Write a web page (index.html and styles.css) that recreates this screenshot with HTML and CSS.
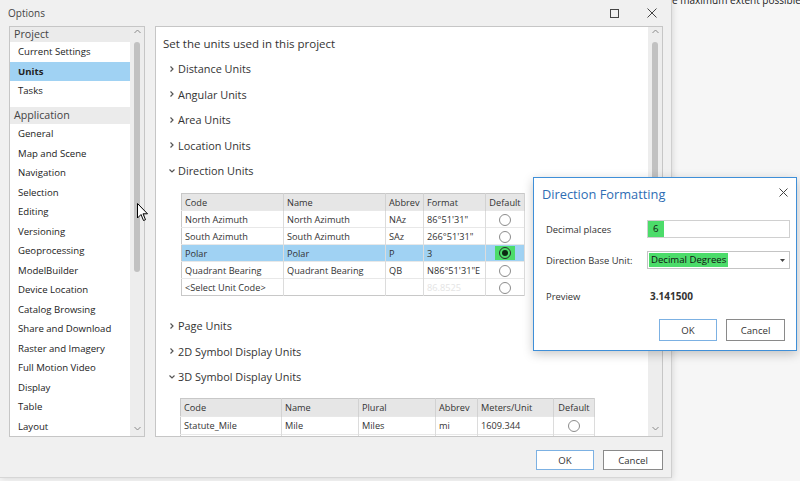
FILE: index.html
```html
<!DOCTYPE html>
<html>
<head>
<meta charset="utf-8">
<title>Options</title>
<link rel="stylesheet" href="styles.css">
</head>
<body>
<div class="bg-text">e maximum extent possible (</div>

<div class="window">
  <div class="titlebar">
    <span class="title">Options</span>
    <div class="tb-controls">
      <svg class="tb-icon" width="9" height="9" viewBox="0 0 9 9"><rect x="0.5" y="0.5" width="8" height="8" fill="none" stroke="#444" stroke-width="1"/></svg>
      <svg class="tb-icon" width="10" height="10" viewBox="0 0 10 10"><path d="M0.5 0.5 L9.5 9.5 M9.5 0.5 L0.5 9.5" stroke="#444" stroke-width="1" fill="none"/></svg>
    </div>
  </div>

  <div class="panes">
    <div class="nav">
      <div class="nav-list">
        <div class="nav-head">Project</div>
        <div class="nav-item">Current Settings</div>
        <div class="nav-item sel">Units</div>
        <div class="nav-item">Tasks</div>
        <div class="nav-head app">Application</div>
        <div class="nav-item">General</div>
        <div class="nav-item">Map and Scene</div>
        <div class="nav-item">Navigation</div>
        <div class="nav-item">Selection</div>
        <div class="nav-item">Editing</div>
        <div class="nav-item">Versioning</div>
        <div class="nav-item">Geoprocessing</div>
        <div class="nav-item">ModelBuilder</div>
        <div class="nav-item">Device Location</div>
        <div class="nav-item">Catalog Browsing</div>
        <div class="nav-item">Share and Download</div>
        <div class="nav-item">Raster and Imagery</div>
        <div class="nav-item">Full Motion Video</div>
        <div class="nav-item">Display</div>
        <div class="nav-item">Table</div>
        <div class="nav-item">Layout</div>
      </div>
      <div class="vscroll">
        <svg class="sb-arrow" width="7" height="10" viewBox="0 0 7 10"><path d="M0.5 6 L3.5 3 L6.5 6" stroke="#8a8a8a" fill="none" stroke-width="1"/></svg>
        <div class="thumb nav-thumb"></div>
        <div class="sb-fill"></div>
        <svg class="sb-arrow down" width="7" height="10" viewBox="0 0 7 10"><path d="M0.5 4 L3.5 7 L6.5 4" stroke="#8a8a8a" fill="none" stroke-width="1"/></svg>
      </div>
    </div>

    <div class="main">
      <div class="content">
        <div class="heading">Set the units used in this project</div>
        <div class="section"><svg class="chev" width="6" height="8" viewBox="0 0 6 8"><path d="M1.5 1.5 L4 4 L1.5 6.5" stroke="#555" stroke-width="1.2" fill="none"/></svg>Distance Units</div>
        <div class="section"><svg class="chev" width="6" height="8" viewBox="0 0 6 8"><path d="M1.5 1.5 L4 4 L1.5 6.5" stroke="#555" stroke-width="1.2" fill="none"/></svg>Angular Units</div>
        <div class="section"><svg class="chev" width="6" height="8" viewBox="0 0 6 8"><path d="M1.5 1.5 L4 4 L1.5 6.5" stroke="#555" stroke-width="1.2" fill="none"/></svg>Area Units</div>
        <div class="section"><svg class="chev" width="6" height="8" viewBox="0 0 6 8"><path d="M1.5 1.5 L4 4 L1.5 6.5" stroke="#555" stroke-width="1.2" fill="none"/></svg>Location Units</div>
        <div class="section"><svg class="chev" width="6" height="8" viewBox="0 0 6 8"><path d="M0.5 2.5 L3 5 L5.5 2.5" stroke="#555" stroke-width="1.2" fill="none"/></svg>Direction Units</div>

        <table class="grid t1">
          <colgroup>
            <col class="w102"><col class="w102"><col class="w38"><col class="w62"><col class="w39">
          </colgroup>
          <thead>
            <tr><th>Code</th><th>Name</th><th>Abbrev</th><th>Format</th><th>Default</th></tr>
          </thead>
          <tbody>
            <tr><td>North Azimuth</td><td>North Azimuth</td><td>NAz</td><td>86°51'31"</td><td class="ctr"><span class="radio"></span></td></tr>
            <tr><td>South Azimuth</td><td>South Azimuth</td><td>SAz</td><td>266°51'31"</td><td class="ctr"><span class="radio"></span></td></tr>
            <tr class="sel"><td>Polar</td><td>Polar</td><td>P</td><td>3</td><td class="ctr"><span class="radio-hl"><span class="radio on"></span></span></td></tr>
            <tr><td>Quadrant Bearing</td><td>Quadrant Bearing</td><td>QB</td><td>N86°51'31"E</td><td class="ctr"><span class="radio"></span></td></tr>
            <tr><td>&lt;Select Unit Code&gt;</td><td></td><td></td><td class="faint">86.8525</td><td class="ctr"><span class="radio"></span></td></tr>
          </tbody>
        </table>

        <div class="section after-table"><svg class="chev" width="6" height="8" viewBox="0 0 6 8"><path d="M1.5 1.5 L4 4 L1.5 6.5" stroke="#555" stroke-width="1.2" fill="none"/></svg>Page Units</div>
        <div class="section"><svg class="chev" width="6" height="8" viewBox="0 0 6 8"><path d="M1.5 1.5 L4 4 L1.5 6.5" stroke="#555" stroke-width="1.2" fill="none"/></svg>2D Symbol Display Units</div>
        <div class="section"><svg class="chev" width="6" height="8" viewBox="0 0 6 8"><path d="M0.5 2.5 L3 5 L5.5 2.5" stroke="#555" stroke-width="1.2" fill="none"/></svg>3D Symbol Display Units</div>

        <table class="grid t2">
          <colgroup>
            <col class="w101"><col class="w77"><col class="w77"><col class="w42"><col class="w76"><col class="w41">
          </colgroup>
          <thead>
            <tr><th>Code</th><th>Name</th><th>Plural</th><th>Abbrev</th><th>Meters/Unit</th><th>Default</th></tr>
          </thead>
          <tbody>
            <tr><td>Statute_Mile</td><td>Mile</td><td>Miles</td><td>mi</td><td>1609.344</td><td class="ctr"><span class="radio"></span></td></tr>
            <tr><td></td><td></td><td></td><td></td><td></td><td></td></tr>
          </tbody>
        </table>
      </div>
      <div class="vscroll">
        <svg class="sb-arrow" width="7" height="10" viewBox="0 0 7 10"><path d="M0.5 6 L3.5 3 L6.5 6" stroke="#8a8a8a" fill="none" stroke-width="1"/></svg>
        <div class="thumb main-thumb"></div>
        <div class="sb-fill"></div>
        <svg class="sb-arrow down" width="7" height="10" viewBox="0 0 7 10"><path d="M0.5 4 L3.5 7 L6.5 4" stroke="#8a8a8a" fill="none" stroke-width="1"/></svg>
      </div>
    </div>
  </div>

  <div class="footer">
    <button class="btn primary">OK</button>
    <button class="btn cancel">Cancel</button>
  </div>
</div>

<div class="dialog">
  <div class="dlg-head">
    <span class="dlg-title">Direction Formatting</span>
    <svg class="dlg-close" width="9" height="9" viewBox="0 0 9 9"><path d="M0.5 0.5 L8.5 8.5 M8.5 0.5 L0.5 8.5" stroke="#444" stroke-width="1" fill="none"/></svg>
  </div>
  <div class="dlg-body">
    <div class="dlg-row">
      <span class="dlg-label">Decimal places</span>
      <div class="dlg-field"><span class="hl-box">6</span></div>
    </div>
    <div class="dlg-row r2">
      <span class="dlg-label">Direction Base Unit:</span>
      <div class="dlg-field select"><span class="hl-text">Decimal Degrees</span><svg class="dd" width="5" height="3" viewBox="0 0 5 3"><path d="M0 0 L5 0 L2.5 3 Z" fill="#444"/></svg></div>
    </div>
    <div class="dlg-row r3">
      <span class="dlg-label">Preview</span>
      <span class="preview">3.141500</span>
    </div>
    <div class="dlg-buttons">
      <button class="btn primary dbtn">OK</button>
      <button class="btn cancel dbtn">Cancel</button>
    </div>
  </div>
</div>

<svg class="cursor" width="12" height="19" viewBox="0 0 12 19"><path d="M0.5 0.5 L0.5 15 L4 11.5 L6.5 17.5 L8.5 16.7 L6 10.8 L10.5 10.8 Z" fill="#fff" stroke="#000" stroke-width="1" stroke-linejoin="round"/></svg>
</body>
</html>
```
FILE: styles.css
```css
* { box-sizing: border-box; margin: 0; padding: 0; }
html, body { width: 800px; height: 481px; overflow: hidden; }
body {
  background: #f6f6f6;
  font-family: "Open Sans", "Noto Sans", sans-serif;
  color: #333;
  position: relative;
}

.bg-text {
  position: absolute;
  left: 672px;
  top: -6px;
  font-size: 10px;
  line-height: 12px;
  color: #222;
  white-space: nowrap;
}

/* ---------- Options window ---------- */
.window {
  position: absolute;
  left: 0;
  top: 0;
  width: 672px;
  height: 478px;
  background: #f0f0f0;
  border-right: 1px solid #cfcfcf;
  border-bottom: 1px solid #d6d6d6;
  box-shadow: 1px 1px 6px rgba(0, 0, 0, 0.12);
  display: flex;
  flex-direction: column;
}

.titlebar {
  height: 26px;
  flex: none;
  display: flex;
  align-items: center;
  padding-left: 8px;
}
.title { flex: 1; font-size: 10px; color: #444; }
.tb-controls { display: flex; align-items: center; gap: 28px; margin-right: 14px; }
.tb-icon { display: block; }

.panes {
  flex: none;
  height: 411px;
  display: flex;
  gap: 10px;
  padding-left: 9px;
}

/* nav list */
.nav {
  width: 136px;
  display: flex;
  background: #fff;
  border: 1px solid #c6c6c6;
}
.nav-list { width: 120px; flex: none; }
.nav-head {
  height: 15px;
  line-height: 15px;
  background: #ebebeb;
  padding-left: 4px;
  font-size: 10.7px;
  color: #444;
}
.nav-head.app { height: 17px; line-height: 17px; margin-top: 6.5px; }
.nav-item {
  height: 19.5px;
  line-height: 19.5px;
  padding-left: 8px;
  font-size: 9.6px;
  color: #222;
  white-space: nowrap;
}
.nav-item.sel { background: #a0d2f3; font-weight: 700; }

/* scrollbars */
.vscroll {
  width: 14px;
  flex: none;
  background: #ededed;
  display: flex;
  flex-direction: column;
  align-items: center;
}
.sb-arrow { display: block; flex: none; }
.sb-arrow.down { margin-bottom: 3px; }
.thumb { width: 6px; border-radius: 3px; background: #c1c1c1; margin-top: 5px; flex: none; }
.nav-thumb { height: 230px; }
.main-thumb { height: 257px; }
.sb-fill { flex: 1; }

/* main pane */
.main {
  width: 508px;
  display: flex;
  background: #fff;
  border: 1px solid #c6c6c6;
}
.content { flex: 1; overflow: hidden; padding: 3.5px 0 0 7px; }
.heading { height: 25.5px; line-height: 25.5px; font-size: 11.5px; color: #333; }
.section {
  height: 25.5px;
  display: flex;
  align-items: center;
  padding-left: 6px;
  font-size: 10.9px;
  color: #333;
  white-space: nowrap;
}
.chev { display: block; margin-right: 3px; flex: none; }
.section.after-table { margin-top: 17px; }

/* grids */
.grid {
  border-collapse: collapse;
  table-layout: fixed;
  font-size: 9.2px;
  color: #333;
  border: 1px solid #c8c8c8;
}
.t1 { margin: 9.5px 0 0 18px; width: 343px; }
.t2 { margin: 8.5px 0 0 17px; width: 414px; }
.w102 { width: 102px; } .w38 { width: 38px; } .w62 { width: 62px; } .w39 { width: 39px; }
.w101 { width: 101px; } .w77 { width: 77px; } .w42 { width: 42px; } .w76 { width: 76px; } .w41 { width: 41px; }
.grid th {
  background: #e6e6e6;
  font-weight: 400;
  text-align: left;
  height: 17px;
  padding: 0 3px;
  border-right: 1px solid #d2d2d2;
  white-space: nowrap;
  overflow: hidden;
}
.t2 th { height: 18px; }
.grid td {
  height: 17px;
  padding: 0 3px;
  border-right: 1px solid #dcdcdc;
  border-top: 1px solid #e8e8e8;
  white-space: nowrap;
  overflow: hidden;
}
.t2 td { height: 18px; }
.grid td.ctr, .grid th:last-child { text-align: center; }
.grid tr.sel td { background: #a0d2f3; }
.grid td.faint { color: #e4e4e4; }
.radio {
  display: inline-block;
  vertical-align: middle;
  width: 12px;
  height: 12px;
  border: 1px solid #8c8c8c;
  border-radius: 50%;
  background: #fff;
  position: relative;
}
.radio.on { border-color: #2a2a2a; background: #4cdc6a; }
.radio.on::after {
  content: "";
  position: absolute;
  left: 2px; top: 2px;
  width: 6px; height: 6px;
  border-radius: 50%;
  background: #0c2a12;
}
.radio-hl { display: inline-block; background: #4cdc6a; padding: 1px 4px; line-height: 0; }

/* footer */
.footer {
  flex: 1;
  display: flex;
  justify-content: flex-end;
  align-items: flex-start;
  gap: 9px;
  padding: 13px 8px 0 0;
}
.btn {
  height: 20px;
  width: 59px;
  background: #fff;
  border: 1px solid #8a8a8a;
  font-family: inherit;
  font-size: 9.6px;
  color: #333;
}
.btn.primary { border-color: #7cb1e3; width: 58px; }
.btn.cancel { width: 60px; }

/* ---------- dialog ---------- */
.dialog {
  position: absolute;
  left: 533px;
  top: 177px;
  width: 264px;
  height: 174px;
  background: #fff;
  border: 1px solid #3f8fd8;
  box-shadow: 0 3px 10px rgba(0, 0, 0, 0.22);
}
.dlg-head {
  height: 26px;
  padding: 7px 8px 0 8px;
  display: flex;
  justify-content: space-between;
  align-items: flex-start;
}
.dlg-title { font-size: 12.8px; line-height: 18px; color: #2e6db4; }
.dlg-close { display: block; margin-top: 3px; }
.dlg-body { padding: 16px 6px 0 12px; }
.dlg-row { display: flex; align-items: center; height: 18px; }
.dlg-row.r2 { margin-top: 13px; }
.dlg-row.r3 { margin-top: 18px; }
.dlg-label { width: 101px; flex: none; font-size: 9.4px; color: #333; white-space: nowrap; }
.dlg-field {
  width: 143px;
  height: 18px;
  border: 1px solid #d0d0d0;
  display: flex;
  align-items: stretch;
  font-size: 9.6px;
  color: #111;
}
.hl-box { width: 16px; background: #4cdc6a; padding-left: 5px; line-height: 16px; }
.dlg-field.select { align-items: center; padding: 0 4px 0 1px; justify-content: space-between; border-color: #c4c4c4; }
.hl-text { background: #4cdc6a; line-height: 14px; padding: 0 2px; }
.dd { display: block; }
.preview { font-size: 10px; font-weight: 700; color: #333; padding-left: 3px; }
.dlg-buttons { display: flex; justify-content: flex-end; gap: 9px; margin-top: 14px; padding-right: 5px; }
.dbtn { height: 22px; width: 59px; }
.btn.cancel.dbtn { width: 59px; }

.cursor { position: absolute; left: 137px; top: 203px; }
```
